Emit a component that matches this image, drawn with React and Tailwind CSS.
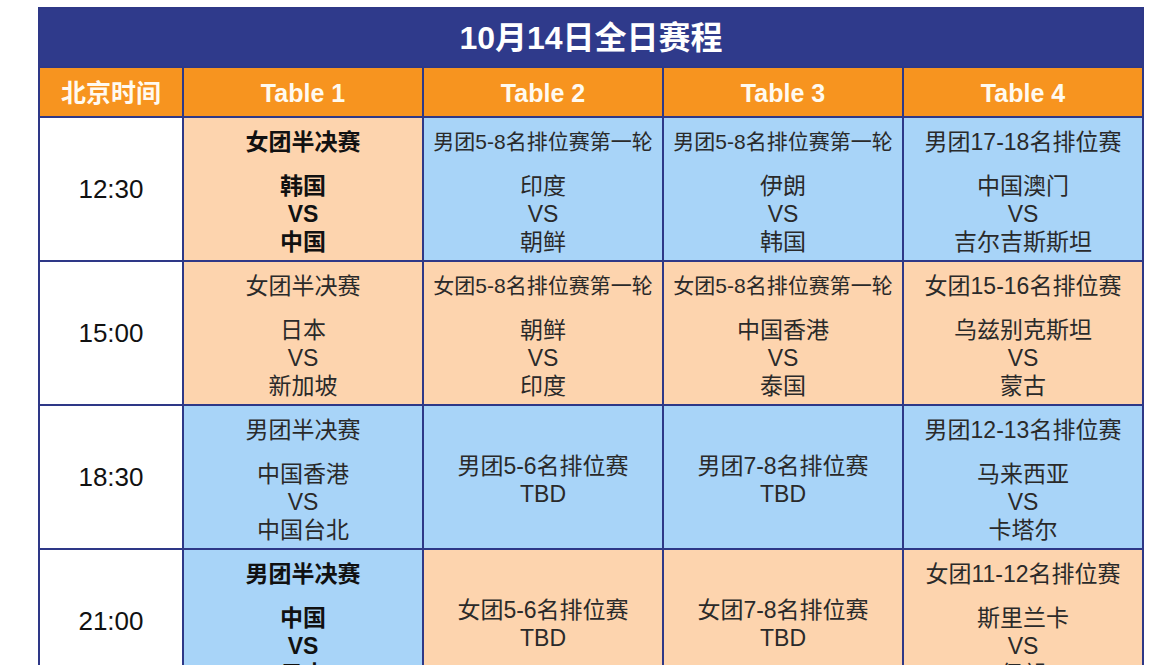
const PEACH = "bg-[#fdd4ae]";
const BLUE = "bg-[#a8d4f8]";

const rows = [
  {
    time: "12:30",
    cells: [
      { bg: PEACH, bold: true, title: "女团半决赛", teams: ["韩国", "中国"] },
      { bg: BLUE, small: true, title: "男团5-8名排位赛第一轮", teams: ["印度", "朝鲜"] },
      { bg: BLUE, small: true, title: "男团5-8名排位赛第一轮", teams: ["伊朗", "韩国"] },
      { bg: BLUE, title: "男团17-18名排位赛", teams: ["中国澳门", "吉尔吉斯斯坦"] },
    ],
  },
  {
    time: "15:00",
    cells: [
      { bg: PEACH, title: "女团半决赛", teams: ["日本", "新加坡"] },
      { bg: PEACH, small: true, title: "女团5-8名排位赛第一轮", teams: ["朝鲜", "印度"] },
      { bg: PEACH, small: true, title: "女团5-8名排位赛第一轮", teams: ["中国香港", "泰国"] },
      { bg: PEACH, title: "女团15-16名排位赛", teams: ["乌兹别克斯坦", "蒙古"] },
    ],
  },
  {
    time: "18:30",
    cells: [
      { bg: BLUE, title: "男团半决赛", teams: ["中国香港", "中国台北"] },
      { bg: BLUE, title: "男团5-6名排位赛", tbd: true },
      { bg: BLUE, title: "男团7-8名排位赛", tbd: true },
      { bg: BLUE, title: "男团12-13名排位赛", teams: ["马来西亚", "卡塔尔"] },
    ],
  },
  {
    time: "21:00",
    cells: [
      { bg: BLUE, bold: true, title: "男团半决赛", teams: ["中国", "日本"] },
      { bg: PEACH, title: "女团5-6名排位赛", tbd: true },
      { bg: PEACH, title: "女团7-8名排位赛", tbd: true },
      { bg: PEACH, title: "女团11-12名排位赛", teams: ["斯里兰卡", "伊朗"] },
    ],
  },
];

function MatchCell({ cell }) {
  const weight = cell.bold ? "font-bold text-[#111]" : "font-normal text-[#2a2a2a]";
  if (cell.tbd) {
    return (
      <div className={`${cell.bg} ${weight} flex flex-col items-center justify-center pt-[5px] text-[23px] leading-[28px]`}>
        <div className="whitespace-nowrap">{cell.title}</div>
        <div>TBD</div>
      </div>
    );
  }
  return (
    <div className={`${cell.bg} ${weight} flex flex-col items-center justify-center pt-[6px] text-[23px] leading-[28px]`}>
      <div className={`whitespace-nowrap ${cell.small ? "text-[21px]" : ""}`}>{cell.title}</div>
      <div className="mt-[16px] flex flex-col items-center">
        <div>{cell.teams[0]}</div>
        <div>VS</div>
        <div>{cell.teams[1]}</div>
      </div>
    </div>
  );
}

export default function App() {
  return (
    <div
      className="min-h-screen bg-white pl-[38px] pt-[7px]"
      style={{ fontFamily: '"Liberation Sans", "Noto Sans CJK SC", sans-serif' }}
    >
      <div className="grid w-[1106px] grid-cols-[142px_238px_238px_238px_238px] gap-[2px] bg-[#2e3887] p-[2px]">
        <div className="col-span-5 flex h-[57px] items-center justify-center bg-[#2f3a8b] text-[32px] font-bold text-white">
          10月14日全日赛程
        </div>

        <div className="flex h-[48px] items-center justify-center bg-[#f7941f] pt-[3px] text-[25px] font-bold text-[#fffaf0]">
          北京时间
        </div>
        {["Table 1", "Table 2", "Table 3", "Table 4"].map((t) => (
          <div
            key={t}
            className="flex h-[48px] items-center justify-center bg-[#f7941f] pt-[3px] text-[25px] font-bold text-[#fffaf0]"
          >
            {t}
          </div>
        ))}

        {rows.map((row) => (
          <div key={row.time} className="contents">
            <div className="flex h-[142px] items-center justify-center bg-white text-[26px] text-[#111]">
              {row.time}
            </div>
            {row.cells.map((cell, i) => (
              <MatchCell key={i} cell={cell} />
            ))}
          </div>
        ))}
      </div>
    </div>
  );
}
